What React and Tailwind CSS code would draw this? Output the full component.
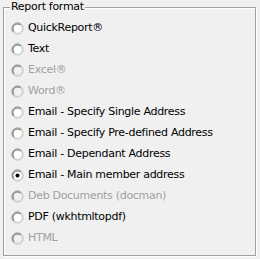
import { useState } from "react";

const options = [
  { label: "QuickReport®", enabled: true },
  { label: "Text", enabled: true },
  { label: "Excel®", enabled: false },
  { label: "Word®", enabled: false },
  { label: "Email - Specify Single Address", enabled: true },
  { label: "Email - Specify Pre-defined Address", enabled: true },
  { label: "Email - Dependant Address", enabled: true },
  { label: "Email - Main member address", enabled: true },
  { label: "Deb Documents (docman)", enabled: false },
  { label: "PDF (wkhtmltopdf)", enabled: true },
  { label: "HTML", enabled: false },
];

// classic Windows radio button
function RadioDot({ checked, enabled }) {
  return (
    <svg width="13" height="13" viewBox="0 0 13 13" className="shrink-0">
      <circle cx="6.5" cy="6.5" r="5.5" fill={enabled ? "#ffffff" : "#f0f0f0"} stroke="#b4b4b4" strokeWidth="1" />
      <path d="M3.3 9.7 A4.5 4.5 0 0 1 9.7 3.3" fill="none" stroke="#6e6e6e" strokeWidth="1" />
      <path d="M2.6 10.4 A5.5 5.5 0 0 1 10.4 2.6" fill="none" stroke="#9a9a9a" strokeWidth="1" />
      <path d="M9.7 3.3 A4.5 4.5 0 0 1 3.3 9.7" fill="none" stroke="#e3e3e3" strokeWidth="1" />
      {checked && <circle cx="6.5" cy="6.5" r="2" fill="#000000" />}
    </svg>
  );
}

export default function App() {
  const [selected, setSelected] = useState(7);

  return (
    <div
      className="w-[260px] h-[259px] bg-[#f0f0f0] pl-[3px] text-[11px] text-black tracking-[-0.3px]"
      style={{ fontFamily: "Tahoma, 'DejaVu Sans', sans-serif" }}
    >
      <fieldset className="w-[253px] h-[256px] border border-[#a0a0a0] shadow-[1px_1px_0_#ffffff,inset_1px_1px_0_#ffffff] px-[6px] pt-[4px]">
        <legend className="px-[1px] bg-[#f0f0f0] leading-[14px]">Report format</legend>
        <div className="flex flex-col">
          {options.map((opt, i) => (
            <div
              key={opt.label}
              onClick={() => opt.enabled && setSelected(i)}
              className="h-[21px] flex items-center gap-[4px] pl-[1px]"
            >
              <RadioDot checked={selected === i} enabled={opt.enabled} />
              <span className={opt.enabled ? "text-black" : "text-[#a0a0a0]"}>{opt.label}</span>
            </div>
          ))}
        </div>
      </fieldset>
    </div>
  );
}
